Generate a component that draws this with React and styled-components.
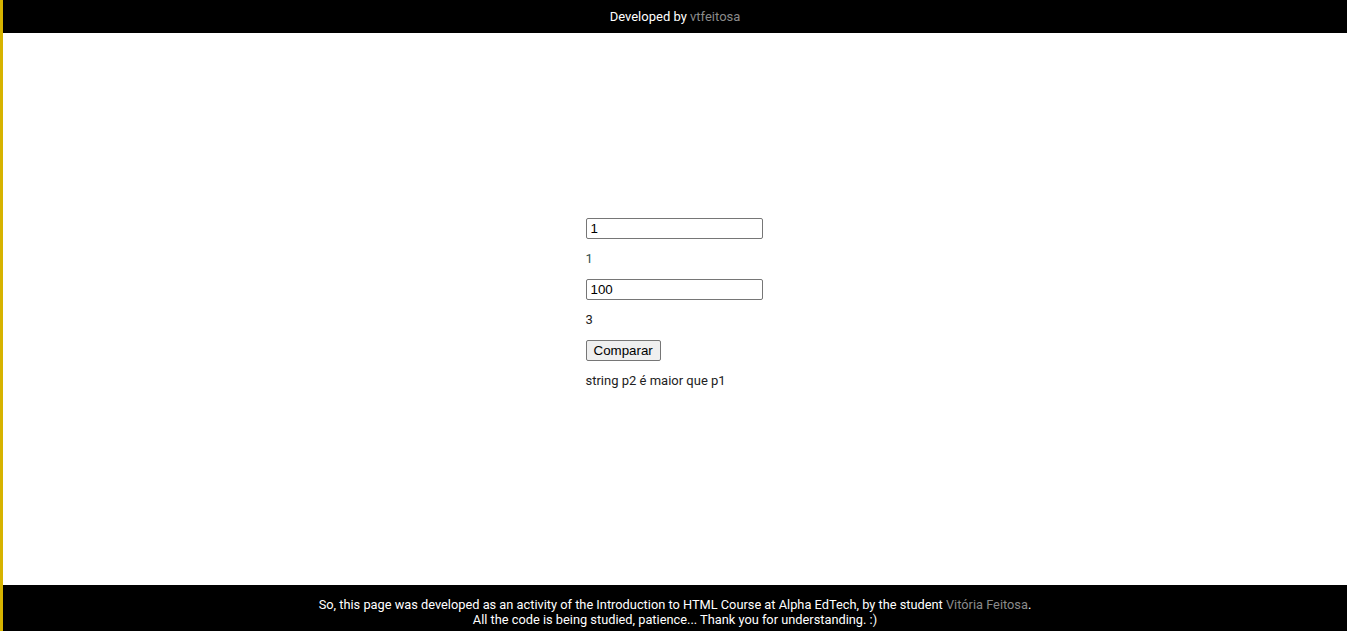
import { useState } from 'react';
import styled, { createGlobalStyle } from 'styled-components';

const GlobalStyle = createGlobalStyle`
  html, body {
    margin: 0;
    padding: 0;
    height: 100%;
  }
  body {
    font-family: Roboto, "Liberation Sans", Arial, sans-serif;
    font-size: 13px;
    color: #222;
    background: #fff;
  }
`;

const Page = styled.div`
  display: flex;
  flex-direction: column;
  height: 631px;
  border-left: 3px solid #d6b300;
`;

const Header = styled.header`
  height: 33px;
  background: #000;
  color: #fff;
  display: flex;
  align-items: center;
  justify-content: center;
  padding-bottom: 1px;
  box-sizing: border-box;
`;

const Credit = styled.span`
  color: #8a8a8a;
`;

const Main = styled.main`
  flex: 1;
  display: flex;
  align-items: center;
  justify-content: center;
`;

const Form = styled.div`
  width: 177px;
  display: flex;
  flex-direction: column;
  align-items: flex-start;
  margin-left: -2px;
`;

const Field = styled.input`
  box-sizing: border-box;
  width: 177px;
  height: 21px;
  padding: 1px 4px;
  border: 1px solid #767676;
  border-radius: 2px;
  font-family: "Liberation Sans", Arial, sans-serif;
  font-size: 13.33px;
  color: #000;
  outline: none;
`;

const Output = styled.p`
  margin: 13px 0;
  line-height: 14px;
  color: ${(p) => p.$tint || '#222'};
`;

const Button = styled.button`
  height: 21px;
  padding: 1px 7px;
  border: 1px solid #767676;
  border-radius: 2px;
  background: #efefef;
  font-family: "Liberation Sans", Arial, sans-serif;
  font-size: 13.33px;
  color: #000;
`;

const Footer = styled.footer`
  height: 46px;
  box-sizing: border-box;
  background: #000;
  color: #fff;
  text-align: center;
  font-size: 12.8px;
  line-height: 15px;
  padding-top: 12px;
`;

export default function App() {
  const [p1, setP1] = useState('1');
  const [p2, setP2] = useState('100');

  return (
    <>
      <GlobalStyle />
      <Page>
        <Header>
          Developed by&nbsp;<Credit>vtfeitosa</Credit>
        </Header>
        <Main>
          <Form>
            <Field value={p1} onChange={(e) => setP1(e.target.value)} />
            <Output $tint="#2f4f4f">{p1.length}</Output>
            <Field value={p2} onChange={(e) => setP2(e.target.value)} />
            <Output>{p2.length}</Output>
            <Button>Comparar</Button>
            <Output>string p2 é maior que p1</Output>
          </Form>
        </Main>
        <Footer>
          So, this page was developed as an activity of the Introduction to HTML Course at Alpha EdTech, by the student{' '}
          <Credit>Vitória Feitosa</Credit>.
          <br />
          All the code is being studied, patience... Thank you for understanding. :)
        </Footer>
      </Page>
    </>
  );
}
